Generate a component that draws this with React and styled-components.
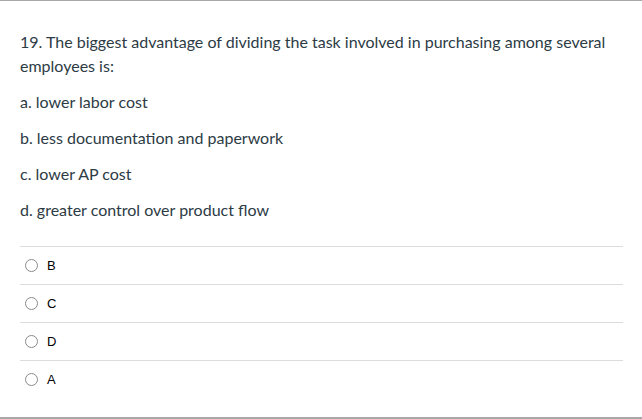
import React from 'react'
import styled, { createGlobalStyle } from 'styled-components'

const GlobalStyle = createGlobalStyle`
  html, body {
    margin: 0;
    padding: 0;
    background: #fff;
  }
`;

const Frame = styled.div`
  width: 642px;
  height: 419px;
  box-sizing: border-box;
  border-top: 1px solid #a8a8a8;
  border-bottom: 2px solid #a8a8a8;
  padding: 29px 19px 0 20px;
`;

const Question = styled.div`
  font-family: Lato, "Liberation Sans", sans-serif;
  font-size: 16px;
  line-height: 24px;
  color: #2d3b45;
`;

const Para = styled.p`
  margin: 0 0 12px 0;
`;

const Choices = styled.div`
  margin-top: 24px;
  border-top: 1px solid #dcdcdc;
`;

const Choice = styled.label`
  display: flex;
  align-items: center;
  height: 37px;
  border-bottom: ${p => (p.last ? 'none' : '1px solid #dcdcdc')};
  font-family: "Liberation Sans", Arial, sans-serif;
  font-size: 13px;
  color: #000;
`;

const Radio = styled.span`
  width: 11px;
  height: 11px;
  border: 1px solid #8a8a8a;
  border-radius: 50%;
  margin-left: 5px;
  margin-right: 9px;
  flex-shrink: 0;
`;

const answers = ['B', 'C', 'D', 'A'];

export default function App() {
  return (
    <>
      <GlobalStyle />
      <Frame>
        <Question>
          <Para>19. The biggest advantage of dividing the task involved in purchasing among several employees is:</Para>
          <Para>a. lower labor cost</Para>
          <Para>b. less documentation and paperwork</Para>
          <Para>c. lower AP cost</Para>
          <Para>d. greater control over product flow</Para>
        </Question>
        <Choices>
          {answers.map((a, i) => (
            <Choice key={a} last={i === answers.length - 1}>
              <Radio />
              {a}
            </Choice>
          ))}
        </Choices>
      </Frame>
    </>
  )
}
